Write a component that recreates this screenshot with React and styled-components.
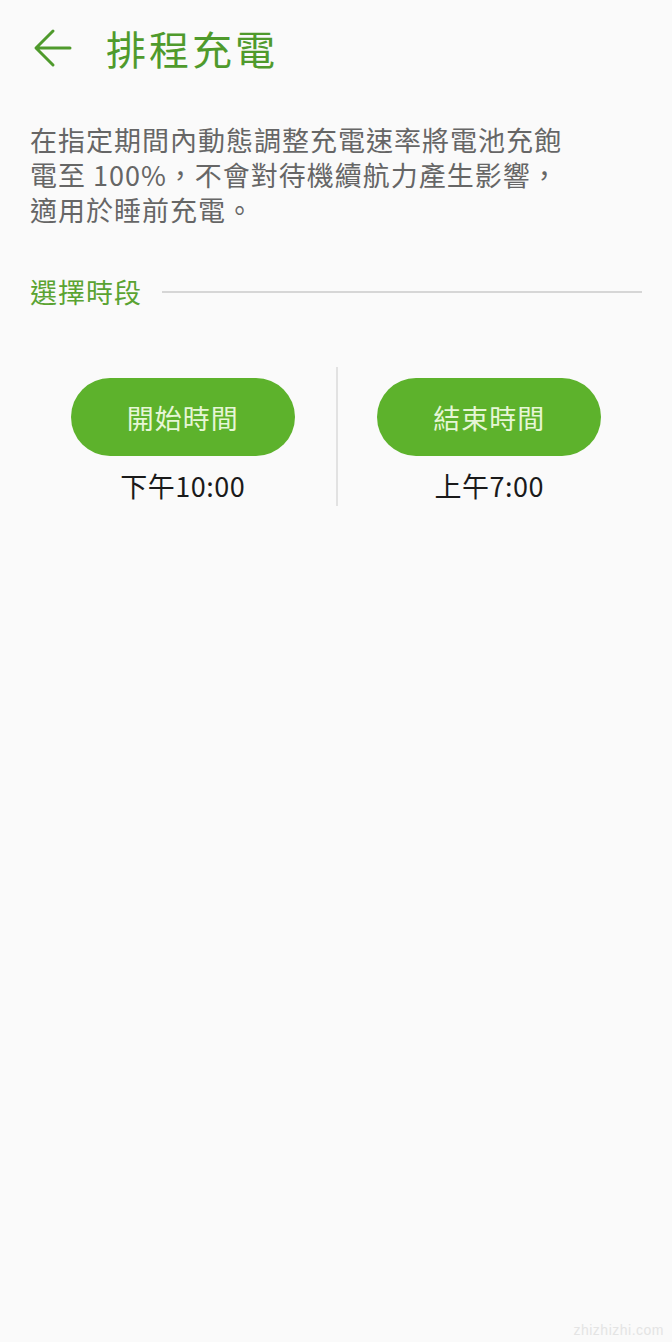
import React from "react";
import styled, { createGlobalStyle } from "styled-components";

const Global = createGlobalStyle`
  html, body { margin: 0; padding: 0; background: #fafafa; }
  body { font-family: "Noto Sans CJK TC", "Noto Sans", sans-serif; }
`;

const Page = styled.div`
  min-height: 1342px;
  background: #fafafa;
  position: relative;
  box-sizing: border-box;
`;

const Header = styled.header`
  display: flex;
  align-items: center;
  height: 96px;
  padding-left: 32px;
  box-sizing: border-box;
`;

const BackButton = styled.button`
  border: none;
  background: transparent;
  padding: 0;
  width: 42px;
  height: 42px;
  display: flex;
  align-items: center;
  justify-content: center;
  margin-right: 32px;
  cursor: pointer;
`;

const Title = styled.h1`
  margin: 0;
  font-size: 40px;
  font-weight: 400;
  color: #4f9a2c;
  line-height: 1;
  letter-spacing: 3px;
`;

const Description = styled.p`
  margin: 26px 30px 0 30px;
  font-size: 27px;
  line-height: 35px;
  color: #666666;
  font-weight: 400;
  letter-spacing: 1px;
`;

const Line = styled.span`
  display: block;
  white-space: nowrap;
`;

const SectionHeader = styled.div`
  display: flex;
  align-items: center;
  margin: 45px 30px 0 30px;
  gap: 20px;
`;

const SectionLabel = styled.span`
  font-size: 27px;
  color: #5aa332;
  line-height: 40px;
  white-space: nowrap;
  letter-spacing: 1px;
`;

const SectionRule = styled.div`
  flex: 1;
  height: 2px;
  background: #d6d6d6;
`;

const TimeRow = styled.div`
  display: grid;
  grid-template-columns: 1fr 1px 1fr;
  margin: 55px 30px 0 30px;
  height: 136px;
`;

const TimeColumn = styled.div`
  display: flex;
  flex-direction: column;
  align-items: center;
  padding-top: 11px;
`;

const Divider = styled.div`
  width: 2px;
  background: #e2e2e2;
`;

const PillButton = styled.button`
  width: 224px;
  height: 78px;
  border: none;
  border-radius: 39px;
  background: #5db22c;
  color: #e6f6d6;
  font-family: "Noto Sans CJK TC", "Noto Sans", sans-serif;
  font-size: 27px;
  letter-spacing: 1px;
  cursor: pointer;
`;

const TimeValue = styled.div`
  margin-top: 10px;
  font-size: 27px;
  color: #1a1a1a;
  line-height: 40px;
  letter-spacing: 0.5px;
`;

const Watermark = styled.div`
  position: absolute;
  right: 8px;
  bottom: 4px;
  font-family: "Liberation Sans", Arial, sans-serif;
  font-size: 14px;
  color: #e4e4e4;
  letter-spacing: 0.5px;
`;

const times = [
  { label: "開始時間", value: "下午10:00" },
  { label: "結束時間", value: "上午7:00" },
];

const lines = [
  "在指定期間內動態調整充電速率將電池充飽",
  "電至 100%，不會對待機續航力產生影響，",
  "適用於睡前充電。",
];

export default function App() {
  return (
    <Page>
      <Global />
      <Header>
        <BackButton aria-label="返回">
          <svg width="42" height="42" viewBox="0 0 42 42" fill="none">
            <path
              d="M38 21 H5 M21 4 L4 21 L21 38"
              stroke="#4f9a2c"
              strokeWidth="3"
              strokeLinecap="round"
              strokeLinejoin="round"
            />
          </svg>
        </BackButton>
        <Title>排程充電</Title>
      </Header>
      <Description>
        {lines.map((l) => (
          <Line key={l}>{l}</Line>
        ))}
      </Description>
      <SectionHeader>
        <SectionLabel>選擇時段</SectionLabel>
        <SectionRule />
      </SectionHeader>
      <TimeRow>
        <TimeColumn>
          <PillButton>{times[0].label}</PillButton>
          <TimeValue>{times[0].value}</TimeValue>
        </TimeColumn>
        <Divider />
        <TimeColumn>
          <PillButton>{times[1].label}</PillButton>
          <TimeValue>{times[1].value}</TimeValue>
        </TimeColumn>
      </TimeRow>
      <Watermark>zhizhizhi.com</Watermark>
    </Page>
  );
}
